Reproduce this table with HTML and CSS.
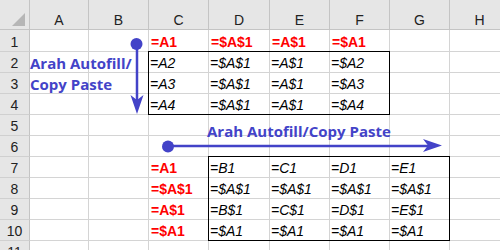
FILE: index.html
```html
<!DOCTYPE html>
<html>
<head>
<meta charset="utf-8">
<link rel="stylesheet" href="styles.css">
</head>
<body>
<div class="sheet">
  <div class="grid">
    <div class="hd corner"><span class="tri"></span></div>
    <div class="hd col">A</div><div class="hd col">B</div><div class="hd col">C</div><div class="hd col">D</div><div class="hd col">E</div><div class="hd col">F</div><div class="hd col">G</div><div class="hd col">H</div>

    <div class="hd row">1</div><div class="c"></div><div class="c"></div><div class="c red">=A1</div><div class="c red">=$A$1</div><div class="c red">=A$1</div><div class="c red">=$A1</div><div class="c"></div><div class="c"></div>
    <div class="hd row">2</div><div class="c label">Arah Autofill/</div><div class="c"></div><div class="c it">=A2</div><div class="c it">=$A$1</div><div class="c it">=A$1</div><div class="c it">=$A2</div><div class="c"></div><div class="c"></div>
    <div class="hd row">3</div><div class="c label">Copy Paste</div><div class="c"></div><div class="c it">=A3</div><div class="c it">=$A$1</div><div class="c it">=A$1</div><div class="c it">=$A3</div><div class="c"></div><div class="c"></div>
    <div class="hd row">4</div><div class="c"></div><div class="c"></div><div class="c it">=A4</div><div class="c it">=$A$1</div><div class="c it">=A$1</div><div class="c it">=$A4</div><div class="c"></div><div class="c"></div>
    <div class="hd row">5</div><div class="c"></div><div class="c"></div><div class="c"></div><div class="c"></div><div class="c"></div><div class="c"></div><div class="c"></div><div class="c"></div>
    <div class="hd row">6</div><div class="c"></div><div class="c"></div><div class="c"></div><div class="c"></div><div class="c"></div><div class="c"></div><div class="c"></div><div class="c"></div>
    <div class="hd row">7</div><div class="c"></div><div class="c"></div><div class="c red">=A1</div><div class="c it">=B1</div><div class="c it">=C1</div><div class="c it">=D1</div><div class="c it">=E1</div><div class="c"></div>
    <div class="hd row">8</div><div class="c"></div><div class="c"></div><div class="c red">=$A$1</div><div class="c it">=$A$1</div><div class="c it">=$A$1</div><div class="c it">=$A$1</div><div class="c it">=$A$1</div><div class="c"></div>
    <div class="hd row">9</div><div class="c"></div><div class="c"></div><div class="c red">=A$1</div><div class="c it">=B$1</div><div class="c it">=C$1</div><div class="c it">=D$1</div><div class="c it">=E$1</div><div class="c"></div>
    <div class="hd row">10</div><div class="c"></div><div class="c"></div><div class="c red">=$A1</div><div class="c it">=$A1</div><div class="c it">=$A1</div><div class="c it">=$A1</div><div class="c it">=$A1</div><div class="c"></div>
    <div class="hd row">11</div><div class="c"></div><div class="c"></div><div class="c"></div><div class="c"></div><div class="c"></div><div class="c"></div><div class="c"></div><div class="c"></div>
  </div>

  <div class="grid boxes">
    <div class="box box1"></div>
    <div class="box box2"></div>
  </div>

  <div class="label2">Arah Autofill/Copy Paste</div>
  <svg class="arrows" width="500" height="250" viewBox="0 0 500 250">
    <g fill="#4343c8" stroke="#4343c8">
      <circle cx="136.5" cy="44" r="6" stroke="none"/>
      <line x1="137" y1="44" x2="137" y2="100" stroke-width="2.5"/>
      <path d="M137 114 L130.5 95 L137 100 L143.5 95 Z" stroke="none"/>
      <circle cx="168" cy="146.5" r="6" stroke="none"/>
      <line x1="168" y1="146" x2="428" y2="146" stroke-width="2.5"/>
      <path d="M442 145.5 L423 139 L428 145.5 L423 152 Z" stroke="none"/>
    </g>
  </svg>
</div>
</body>
</html>
```

FILE: styles.css
```css
html, body {
  margin: 0;
  padding: 0;
  background: #ffffff;
}

body {
  width: 500px;
  height: 250px;
  overflow: hidden;
  font-family: "Liberation Sans", Arial, sans-serif;
}

.sheet {
  position: relative;
  display: grid;
  width: 500px;
  height: 250px;
  overflow: hidden;
}

.grid {
  grid-area: 1 / 1;
  display: grid;
  grid-template-columns: 30px 59px 60px 60px 61px 60px 60px 60px 60px;
  grid-template-rows: 30px 22px repeat(10, 21px);
  width: 510px;
}

.grid > div {
  box-sizing: border-box;
  min-width: 0;
}

.boxes {
  pointer-events: none;
}

.c {
  border-right: 1px solid #d4d4d4;
  border-bottom: 1px solid #d4d4d4;
  display: flex;
  align-items: flex-end;
  padding: 0 0 1px 1px;
  font-size: 14px;
  line-height: 16px;
  white-space: nowrap;
  color: #000;
}

.it {
  font-style: italic;
  padding-left: 1px;
}

.red {
  color: #ff0000;
  font-weight: bold;
  padding-left: 2px;
}

.label {
  font-family: "Open Sans", "DejaVu Sans", sans-serif;
  font-weight: bold;
  font-size: 15px;
  color: #4343c8;
  overflow: visible;
  padding-left: 0;
  padding-bottom: 0;
  line-height: 18px;
}

.hd {
  background: #e6e6e6;
  border-right: 1px solid #c4c4c4;
  border-bottom: 1px solid #c4c4c4;
  color: #222;
  font-size: 14px;
  line-height: 16px;
  display: flex;
  align-items: flex-end;
  justify-content: center;
  padding-bottom: 1px;
}

.hd.row {
  border-bottom-color: #d0d0d0;
}

.corner {
  position: relative;
}

.tri {
  position: absolute;
  left: 12px;
  top: 13px;
  width: 0;
  height: 0;
  border-left: 13px solid transparent;
  border-bottom: 13px solid #b6b6b6;
}

.box {
  border: 1px solid #000;
  margin: -1px 0 0 -1px;
}

.box1 {
  grid-column: 4 / 8;
  grid-row: 3 / 6;
}

.box2 {
  grid-column: 5 / 9;
  grid-row: 8 / 12;
}

.label2 {
  position: absolute;
  left: 207px;
  top: 121px;
  font-family: "Open Sans", "DejaVu Sans", sans-serif;
  font-weight: bold;
  font-size: 15px;
  line-height: 20px;
  color: #4343c8;
  white-space: nowrap;
}

.arrows {
  position: absolute;
  left: 0;
  top: 0;
  pointer-events: none;
}
```
